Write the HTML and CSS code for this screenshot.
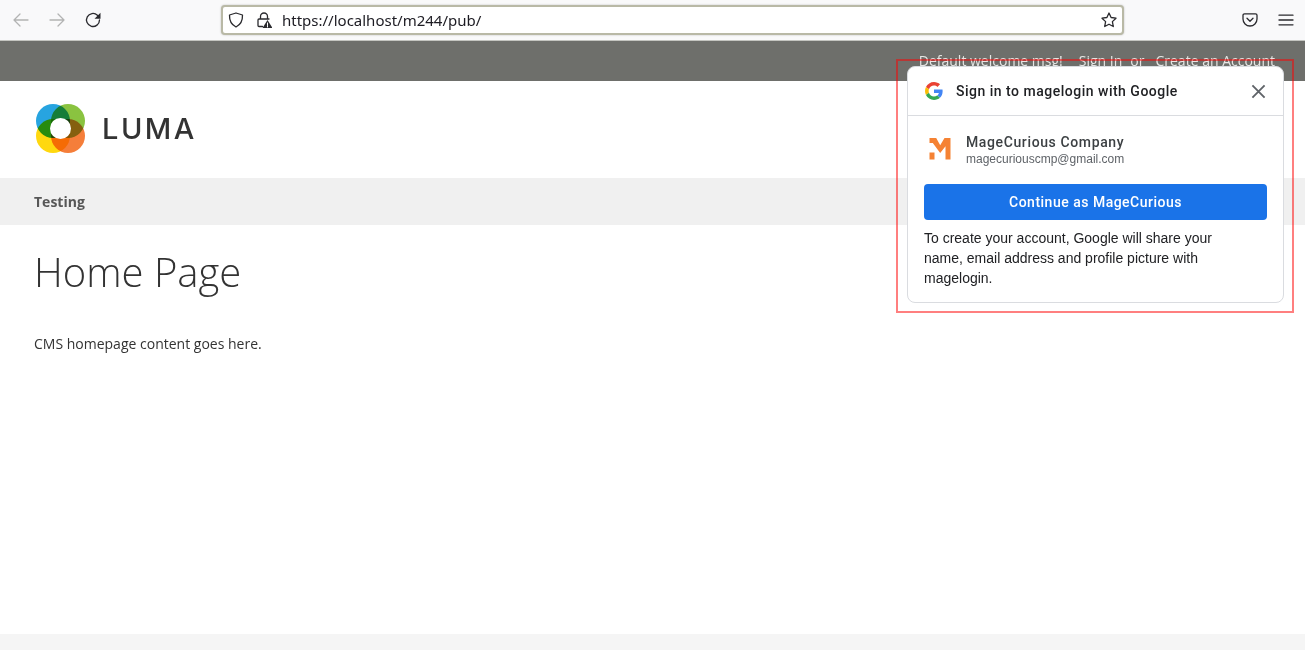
FILE: index.html
```html
<!DOCTYPE html>
<html lang="en">
<head>
<meta charset="utf-8">
<title>Home Page</title>
<link rel="stylesheet" href="styles.css">
</head>
<body>
<div class="toolbar">
  <div class="nav-buttons">
    <svg class="tb-icon" viewBox="0 0 16 16"><path class="s-dim" d="M15 8H1M7 2 1 8l6 6"/></svg>
    <svg class="tb-icon" viewBox="0 0 16 16"><path class="s-dim" d="M1 8h14M9 2l6 6-6 6"/></svg>
    <svg class="tb-icon" viewBox="0 0 16 16"><path class="s-dark" d="M14.500 8A6.500 6.500 0 1 1 12.400 3.200L14.200 5"/><path class="f-dark" d="M15.500 .8v6h-6z"/></svg>
  </div>
  <div class="urlbar">
    <svg class="ub-icon" viewBox="0 0 16 16"><path class="s-dark" d="M8 1 14.500 3c.2 5.500-1.500 9.500-6.500 12C3 12.500 1.300 8.500 1.500 3z"/></svg>
    <svg class="ub-icon" viewBox="0 0 16 16"><path class="s-dark" d="M4.500 7V4.500a3.500 3.500 0 0 1 7 0V7M6.500 14.500H3a1 1 0 0 1-1-1V8a1 1 0 0 1 1-1h10"/><path class="f-dark" d="M11.500 8 16.500 16h-10z"/><path class="warn" d="M11.500 11v2.500M11.500 14.300v.7"/></svg>
    <span class="url">https://localhost/m244/pub/</span>
    <svg class="ub-star" viewBox="0 0 16 16"><path class="s-dark" d="m8 1 2.100 4.500 4.900.7-3.600 3.400.9 4.900L8 12.200l-4.300 2.300.9-4.900L1 6.200l4.900-.7z"/></svg>
  </div>
  <div class="tools">
    <svg class="tb-icon" viewBox="0 0 16 16"><path class="s-dark" d="M2.500 1.800h11a1.500 1.500 0 0 1 1.500 1.500V7A7 7 0 0 1 1 7V3.300a1.500 1.500 0 0 1 1.500-1.500zM5 6.300l3 3 3-3"/></svg>
    <svg class="tb-icon" viewBox="0 0 16 16"><path class="s-dark" d="M1 3.200h14M1 8h14M1 12.800h14"/></svg>
  </div>
</div>

<header class="panel">
  <ul class="panel-links">
    <li>Default welcome msg!</li>
    <li>Sign In</li>
    <li class="or">or</li>
    <li>Create an Account</li>
  </ul>
</header>

<div class="brand">
  <svg class="logo" viewBox="0 0 49 49">
    <g class="petals">
      <circle class="p-blue" cx="17" cy="17" r="17"/>
      <circle class="p-green" cx="32" cy="17" r="17"/>
      <circle class="p-yellow" cx="17" cy="32" r="17"/>
      <circle class="p-orange" cx="32" cy="32" r="17"/>
    </g>
    <circle class="p-core" cx="24.500" cy="24.500" r="10.500"/>
  </svg>
  <span class="wordmark">LUMA</span>
</div>

<nav class="menu"><span class="menu-item">Testing</span></nav>

<main class="content">
  <h1 class="title">Home Page</h1>
  <p class="cms">CMS homepage content goes here.</p>
</main>

<footer class="foot"></footer>

<section class="onetap">
  <div class="onetap-head">
    <svg class="g-logo" viewBox="0 0 48 48">
      <path fill="#EA4335" d="M24 9.500c3.540 0 6.710 1.220 9.210 3.600l6.850-6.850C35.900 2.380 30.470 0 24 0 14.620 0 6.510 5.380 2.560 13.220l7.980 6.190C12.430 13.720 17.740 9.500 24 9.500z"/>
      <path fill="#4285F4" d="M46.980 24.550c0-1.570-.15-3.090-.38-4.550H24v9.020h12.940c-.58 2.960-2.260 5.480-4.780 7.180l7.730 6c4.510-4.180 7.090-10.360 7.090-17.650z"/>
      <path fill="#FBBC05" d="M10.530 28.590c-.48-1.450-.76-2.990-.76-4.590s.27-3.140.76-4.590l-7.980-6.190C.92 16.460 0 20.120 0 24c0 3.880.92 7.540 2.560 10.780l7.970-6.190z"/>
      <path fill="#34A853" d="M24 48c6.480 0 11.930-2.130 15.890-5.810l-7.730-6c-2.150 1.450-4.920 2.300-8.160 2.300-6.260 0-11.570-4.220-13.470-9.910l-7.980 6.190C6.510 42.620 14.620 48 24 48z"/>
    </svg>
    <span class="onetap-title">Sign in to magelogin with Google</span>
    <svg class="close" viewBox="0 0 16 16"><path d="M1.500 1.500l13 13M14.500 1.500l-13 13"/></svg>
  </div>
  <div class="onetap-body">
    <div class="account">
      <svg class="m-logo" viewBox="0 0 21 22"><path d="M0 0h6.700L10.700 7.300 15 0h6v21.500h-5V8.300L10.700 15 3.300 5H0zM0 14.500h5v7H0z"/></svg>
      <div class="account-text">
        <div class="account-name">MageCurious Company</div>
        <div class="account-mail">magecuriouscmp@gmail.com</div>
      </div>
    </div>
    <button class="continue" type="button">Continue as MageCurious</button>
    <p class="notice">To create your account, Google will share your name, email address and profile picture with magelogin.</p>
  </div>
</section>
<div class="highlight"></div>
</body>
</html>
```
FILE: styles.css
```css
* { box-sizing: border-box; }
html, body { margin: 0; padding: 0; }
body {
  width: 1305px;
  height: 650px;
  overflow: hidden;
  position: relative;
  background: #fff;
  font-family: "Open Sans", sans-serif;
  font-size: 14px;
  color: #333;
}
.toolbar {
  height: 41px;
  background: #f9f9fa;
  border-bottom: 1px solid #c4c5c0;
  display: flex;
  align-items: center;
  padding: 0 11px 0 13px;
}
.nav-buttons { display: flex; gap: 20px; width: 208px; }
.tb-icon { width: 16px; height: 16px; display: block; }
.s-dim, .s-dark, .warn { fill: none; stroke-width: 1.300; stroke-linecap: round; stroke-linejoin: round; }
.s-dim { stroke: #b3b4b3; }
.s-dark { stroke: #2a2a2e; }
.f-dark { fill: #2a2a2e; }
.warn { stroke: #fff; stroke-width: 1; }
.urlbar {
  width: 903px;
  height: 30px;
  margin-top: -1px;
  background: #fff;
  border: 2px solid #b9b9a6;
  border-radius: 4px;
  box-shadow: 0 0 2px rgba(0,0,0,.25);
  display: flex;
  align-items: center;
  padding: 0 5px 0 5px;
  gap: 12px;
}
.ub-icon { width: 16px; height: 16px; flex: none; }
.url { font-family: "Noto Sans", sans-serif; font-size: 15px; color: #1c1b22; flex: 1; margin-left: -2px; }
.ub-star { width: 16px; height: 16px; flex: none; }
.tools { display: flex; gap: 20px; margin-left: auto; }

.panel {
  height: 40px;
  background: #6e6f6b;
  display: flex;
  justify-content: flex-end;
  align-items: center;
  padding: 0 30px 2px 0;
}
.panel-links {
  list-style: none;
  display: flex;
  margin: 0;
  padding: 0;
  gap: 16px;
  color: #e6e6e4;
  font-size: 14px;
}
.panel-links .or { margin: 0 -5px 0 -8px; }

.brand {
  height: 97px;
  display: flex;
  align-items: center;
  padding: 0 0 2px 36px;
  gap: 17px;
}
.logo { width: 49px; height: 49px; display: block; }
.petals { isolation: isolate; }
.petals circle { mix-blend-mode: multiply; }
.p-blue { fill: #27a4e0; }
.p-green { fill: #8ac340; }
.p-yellow { fill: #ffd80f; }
.p-orange { fill: #f57e3a; }
.p-core { fill: #fff; }
.wordmark {
  font-family: Inter, sans-serif;
  font-size: 29px;
  font-weight: 500;
  letter-spacing: 2.500px;
  color: #333;
}

.menu {
  height: 47px;
  background: #f0f0f0;
  display: flex;
  align-items: center;
  padding-left: 34px;
}
.menu-item { font-weight: 700; color: #575757; }

.content { height: 409px; padding: 19px 34px 0; }
.title {
  margin: 0;
  font-size: 40px;
  font-weight: 300;
  line-height: 56px;
  color: #333;
}
.cms { margin: 34px 0 0; line-height: 20px; }
.foot { height: 16px; background: #f5f5f5; }

.onetap {
  position: absolute;
  left: 907px;
  top: 66px;
  width: 377px;
  height: 237px;
  background: #fff;
  border: 1px solid #dadce0;
  border-radius: 8px;
  overflow: hidden;
}
.onetap-head {
  height: 49px;
  border-bottom: 1px solid #dadce0;
  display: flex;
  align-items: center;
  padding: 0 17px;
  gap: 13px;
}
.g-logo { width: 18px; height: 18px; flex: none; }
.onetap-title {
  font-family: Roboto, sans-serif;
  font-size: 14px;
  font-weight: 500;
  letter-spacing: .5px;
  color: #202124;
  flex: 1;
}
.close { width: 15px; height: 15px; flex: none; }
.close path { fill: none; stroke: #5f6368; stroke-width: 2; }
.onetap-body { padding: 0 16px; }
.account {
  height: 68px;
  display: flex;
  align-items: center;
  gap: 15px;
  padding-left: 5px;
}
.m-logo { width: 22px; height: 22px; flex: none; margin-top: -2px; }
.m-logo path { fill: #f58233; }
.account-text { margin-top: 0; }
.account-name { font-family: Roboto, sans-serif; font-size: 14px; font-weight: 500; letter-spacing: .62px; color: #3c4043; line-height: 18px; }
.account-mail { font-family: "Liberation Sans", sans-serif; font-size: 12px; color: #5f6368; line-height: 16px; }
.continue {
  display: block;
  width: 343px;
  height: 36px;
  border: 0;
  border-radius: 4px;
  background: #1a73e8;
  color: #fff;
  font-family: Roboto, sans-serif;
  font-size: 14px;
  font-weight: 500;
  letter-spacing: .5px;
}
.notice {
  margin: 8px 0 0;
  max-width: 320px;
  font-family: "Liberation Sans", sans-serif;
  font-size: 14px;
  line-height: 20px;
  color: #202124;
}
.highlight {
  position: absolute;
  left: 896px;
  top: 59px;
  width: 398px;
  height: 254px;
  border: 2px solid rgba(255, 0, 0, .5);
}
```
